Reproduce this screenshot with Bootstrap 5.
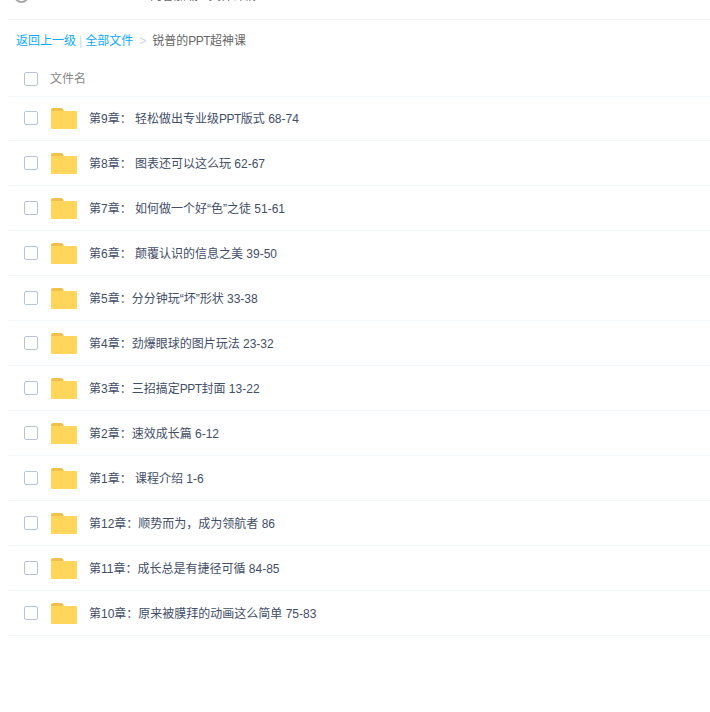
<!doctype html>
<html lang="zh"><head><meta charset="utf-8"><title>文件</title>
<link href="https://cdn.jsdelivr.net/npm/bootstrap@5.3.0/dist/css/bootstrap.min.css" rel="stylesheet">
<style>
html,body{height:712px;overflow:hidden}
body{font-family:"Liberation Sans","Noto Sans CJK SC",sans-serif;font-size:12px;color:#424e67;background:#fff}
.page-wrap{margin-left:8px;overflow:hidden;height:712px}
.top-strip{height:20px;border-bottom:1px solid #f2f2f2;position:relative;overflow:hidden}
.top-ring{position:absolute;left:6px;top:-12px;width:15px;height:15px;border:2px solid #a5a5a5;border-radius:50%}
.top-text{position:absolute;left:142px;top:-13px;color:#666;line-height:18px;white-space:nowrap}
.crumbs{height:52px;padding-left:8px;padding-top:13px;line-height:16px;color:#666}
.crumbs a{color:#09aaff;text-decoration:none}
.crumbs .sep{color:#c4d8f4;margin:0 3px}
.crumbs .arr{color:#ccd3de;margin:0 6px 0 6px}
.tight{letter-spacing:-.5px}
.file-head,.file-row{border-bottom:1px solid #f2f6fd;padding-left:16px}
.file-head{height:25px;color:#888}
.file-row{height:45px}
.file-row:first-child{margin-top:-1px}
.tick{width:14px;height:14px;border:1px solid #b8c4d4;border-radius:2px;flex:none;background:#fff}
.head-label{margin-left:12px;line-height:14px}
.folder-ico{width:26px;height:21px;margin:1px 0 0 13px;flex:none;display:block}
.file-name{margin:2px 0 0 12px;line-height:18px;white-space:nowrap}
</style></head><body>
<div class="page-wrap">
<div class="top-strip"><span class="top-ring"></span><span class="top-text">内容加载 · 文件详情</span></div>
<div class="crumbs"><a href="#">返回上一级</a><span class="sep">|</span><a href="#">全部文件</a><span class="arr">&gt;</span><span>锐普的<span class="tight">PPT</span>超神课</span></div>
<div class="file-head d-flex"><span class="tick"></span><span class="head-label">文件名</span></div>
<div id="rows"></div>
</div>
<script>
var names=["第9章： 轻松做出专业级PPT版式 68-74","第8章： 图表还可以这么玩 62-67","第7章： 如何做一个好“色”之徒 51-61","第6章： 颠覆认识的信息之美 39-50","第5章：分分钟玩“坏”形状 33-38","第4章：劲爆眼球的图片玩法 23-32","第3章：三招搞定PPT封面 13-22","第2章：速效成长篇 6-12","第1章： 课程介绍 1-6","第12章：顺势而为，成为领航者 86","第11章：成长总是有捷径可循 84-85","第10章：原来被膜拜的动画这么简单 75-83"];
document.getElementById('rows').innerHTML=names.map(function(n){return '<div class="file-row d-flex align-items-center"><span class="tick"></span><svg class="folder-ico" viewBox="0 0 26 21"><path d="M0 2a2 2 0 0 1 2-2h8a2.500 2.500 0 0 1 2.500 3H0z" fill="#f0bf4c"/><path d="M0 4a1 1 0 0 1 1-1h24a1 1 0 0 1 1 1v16a1 1 0 0 1-1 1H1a1 1 0 0 1-1-1z" fill="#ffd659"/></svg><span class="file-name">'+n.replace('PPT','<span class="tight">PPT</span>')+'</span></div>'}).join('');
</script>
<script src="https://cdn.jsdelivr.net/npm/bootstrap@5.3.0/dist/js/bootstrap.bundle.min.js"></script>
</body></html>
